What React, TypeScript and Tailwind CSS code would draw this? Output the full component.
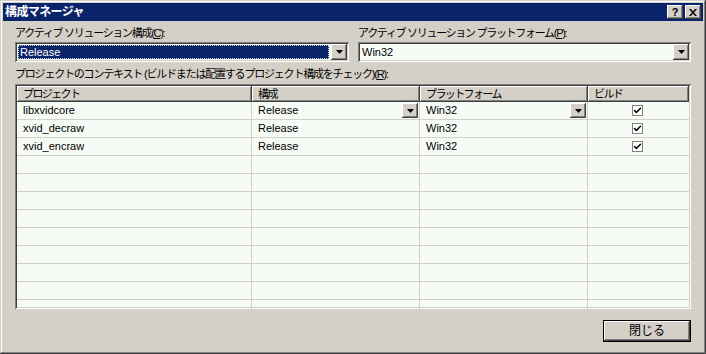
import { Check } from 'lucide-react'

const raised =
  'shadow-[inset_-1px_-1px_#404040,inset_1px_1px_#ffffff,inset_-2px_-2px_#808080,inset_2px_2px_#d4d0c8]'
const sunken =
  'shadow-[inset_1px_1px_#808080,inset_-1px_-1px_#ffffff,inset_2px_2px_#404040,inset_-2px_-2px_#d4d0c8]'

const font = "font-['Liberation_Sans','Noto_Sans_CJK_JP',sans-serif]"

function Arrow() {
  return (
    <svg width="7" height="4" viewBox="0 0 7 4">
      <path d="M0 0h7L3.5 4z" fill="#000" />
    </svg>
  )
}

function DropButton({ className = '' }: { className?: string }) {
  return (
    <div className={`flex items-center justify-center bg-[#d4d0c8] ${raised} ${className}`}>
      <Arrow />
    </div>
  )
}

const rows = [
  { project: 'libxvidcore', config: 'Release', platform: 'Win32', build: true, active: true },
  { project: 'xvid_decraw', config: 'Release', platform: 'Win32', build: true },
  { project: 'xvid_encraw', config: 'Release', platform: 'Win32', build: true },
]

const cols = 'grid grid-cols-[235px_168px_168px_1fr]'

export default function App() {
  const empty = Array.from({ length: 9 })

  return (
    <div
      className={`w-[706px] h-[354px] bg-[#d4d0c8] p-[3px] flex flex-col text-[11px] text-black ${font} shadow-[inset_-1px_-1px_#404040,inset_1px_1px_#d4d0c8,inset_-2px_-2px_#808080,inset_2px_2px_#ffffff]`}
    >
      {/* Title bar */}
      <div className="h-[18px] bg-[#0a246a] flex items-center pl-[2px] pr-[2px]">
        <span className="text-white font-bold text-[12px] tracking-[-0.6px]">構成マネージャ</span>
        <div className="ml-auto flex gap-[2px]">
          <div className={`w-[16px] h-[14px] bg-[#d4d0c8] ${raised} flex items-center justify-center font-bold text-[11px] leading-none`}>
            ?
          </div>
          <div className={`w-[16px] h-[14px] bg-[#d4d0c8] ${raised} flex items-center justify-center`}>
            <svg width="8" height="7" viewBox="0 0 8 7">
              <path d="M0 0h2l2 2.5L6 0h2L5 3.5 8 7H6L4 4.5 2 7H0l3-3.5z" fill="#000" />
            </svg>
          </div>
        </div>
      </div>

      <div className="flex-1 px-[12px] flex flex-col">
        {/* Combos */}
        <div className="grid grid-cols-[334px_1fr] gap-[9px] mt-[4px]">
          <div>
            <div className="h-[16px] leading-[16px] tracking-[-1.3px]">
              アクティブ ソリューション構成(<span className="underline">C</span>):
            </div>
            <div className={`mt-[1px] h-[20px] bg-[#f6fbf6] ${sunken} p-[2px] flex`}>
              <div className="flex-1 m-[1px] bg-[#0a246a] text-white outline-1 outline-dotted outline-[#d4d0c8] -outline-offset-1 pl-[2px] leading-[14px]">
                Release
              </div>
              <DropButton className="w-[16px] ml-[1px]" />
            </div>
          </div>
          <div>
            <div className="h-[16px] leading-[16px] tracking-[-1.3px]">
              アクティブ ソリューション プラットフォーム(<span className="underline">P</span>):
            </div>
            <div className={`mt-[1px] h-[20px] bg-[#f6fbf6] ${sunken} p-[2px] flex`}>
              <div className="flex-1 pl-[2px] leading-[16px]">Win32</div>
              <DropButton className="w-[16px]" />
            </div>
          </div>
        </div>

        <div className="mt-[4px] h-[16px] leading-[16px] tracking-[-1.2px]">
          プロジェクトのコンテキスト (ビルドまたは配置するプロジェクト構成をチェック)(<span className="underline">R</span>):
        </div>

        {/* Grid */}
        <div className={`mt-[2px] h-[225px] bg-[#f6fbf6] ${sunken} p-[2px] overflow-hidden`}>
          <div className={`${cols} h-[16px]`}>
            {['プロジェクト', '構成', 'プラットフォーム', 'ビルド'].map((h) => (
              <div
                key={h}
                className={`bg-[#d4d0c8] ${raised} pl-[6px] leading-[16px] tracking-[-1.6px]`}
              >
                {h}
              </div>
            ))}
          </div>
          {rows.map((r) => (
            <div key={r.project} className={`${cols} h-[18px] border-b border-[#d4d0c8]`}>
              <div className="pl-[6px] leading-[17px] border-r border-[#d4d0c8]">{r.project}</div>
              <div className="pl-[6px] leading-[17px] border-r border-[#d4d0c8] flex">
                <span className="flex-1">{r.config}</span>
                {r.active && <DropButton className="w-[16px] h-[15px] mt-[1px] mr-[1px]" />}
              </div>
              <div className="pl-[6px] leading-[17px] border-r border-[#d4d0c8] flex">
                <span className="flex-1">{r.platform}</span>
                {r.active && <DropButton className="w-[16px] h-[15px] mt-[1px] mr-[1px]" />}
              </div>
              <div className="flex items-center justify-center">
                <div className="w-[11px] h-[11px] bg-white border border-[#808080] flex items-center justify-center ml-[-2px]">
                  {r.build && <Check size={9} strokeWidth={4} color="#000" />}
                </div>
              </div>
            </div>
          ))}
          {empty.map((_, i) => (
            <div key={i} className={`${cols} h-[18px] border-b border-[#d4d0c8]`}>
              <div className="border-r border-[#d4d0c8]" />
              <div className="border-r border-[#d4d0c8]" />
              <div className="border-r border-[#d4d0c8]" />
              <div />
            </div>
          ))}
        </div>

        {/* Footer */}
        <div className="flex justify-end mt-[11px]">
          <div className="w-[88px] h-[22px] border border-black">
            <div className={`w-full h-full bg-[#d4d0c8] ${raised} flex items-center justify-center text-[12px]`}>
              閉じる
            </div>
          </div>
        </div>
      </div>
    </div>
  )
}
